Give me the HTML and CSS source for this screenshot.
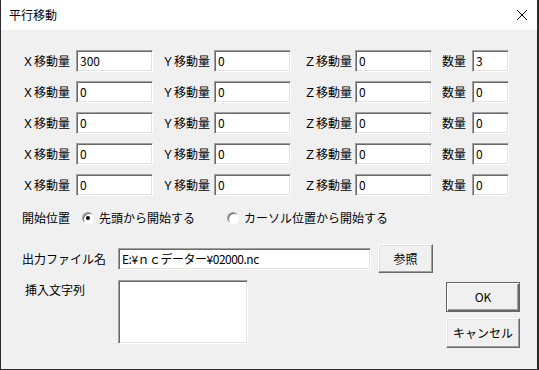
FILE: index.html
```html
<!DOCTYPE html>
<html lang="ja">
<head>
  <meta charset="UTF-8" />
  <title>平行移動</title>
  <link rel="stylesheet" href="styles.css">
</head>
<body>
  <div class="window">
    <div class="titlebar">
      <span class="title">平行移動</span>
      <svg class="close" width="12" height="12" viewBox="0 0 12 12">
        <path d="M1 1 L11 11 M11 1 L1 11" stroke="#000" stroke-width="1" fill="none" />
      </svg>
    </div>

    <div class="content">
      <div class="moves">
        <span class="lbl">Ｘ移動量</span><div class="edit">300</div>
        <span class="lbl lbl-y">Ｙ移動量</span><div class="edit">0</div>
        <span class="lbl lbl-z">Ｚ移動量</span><div class="edit">0</div>
        <span class="lbl lbl-n">数量</span><div class="edit">3</div>

        <span class="lbl">Ｘ移動量</span><div class="edit">0</div>
        <span class="lbl lbl-y">Ｙ移動量</span><div class="edit">0</div>
        <span class="lbl lbl-z">Ｚ移動量</span><div class="edit">0</div>
        <span class="lbl lbl-n">数量</span><div class="edit">0</div>

        <span class="lbl">Ｘ移動量</span><div class="edit">0</div>
        <span class="lbl lbl-y">Ｙ移動量</span><div class="edit">0</div>
        <span class="lbl lbl-z">Ｚ移動量</span><div class="edit">0</div>
        <span class="lbl lbl-n">数量</span><div class="edit">0</div>

        <span class="lbl">Ｘ移動量</span><div class="edit">0</div>
        <span class="lbl lbl-y">Ｙ移動量</span><div class="edit">0</div>
        <span class="lbl lbl-z">Ｚ移動量</span><div class="edit">0</div>
        <span class="lbl lbl-n">数量</span><div class="edit">0</div>

        <span class="lbl">Ｘ移動量</span><div class="edit">0</div>
        <span class="lbl lbl-y">Ｙ移動量</span><div class="edit">0</div>
        <span class="lbl lbl-z">Ｚ移動量</span><div class="edit">0</div>
        <span class="lbl lbl-n">数量</span><div class="edit">0</div>
      </div>

      <div class="start-row">
        <span class="start-label">開始位置</span>
        <label class="radio">
          <span class="radio-dot checked"></span>
          <span>先頭から開始する</span>
        </label>
        <label class="radio radio-second">
          <span class="radio-dot"></span>
          <span>カーソル位置から開始する</span>
        </label>
      </div>

      <div class="file-row">
        <span class="file-label">出力ファイル名</span>
        <div class="edit edit-path">E:¥ｎｃデーター¥02000.nc</div>
        <div class="btn btn-browse">参照</div>
      </div>

      <div class="bottom-row">
        <span class="insert-label">挿入文字列</span>
        <div class="edit edit-area"></div>
        <div class="buttons">
          <div class="btn btn-default">OK</div>
          <div class="btn">キャンセル</div>
        </div>
      </div>
    </div>
  </div>
</body>
</html>
```

FILE: styles.css
```css
* {
  box-sizing: border-box;
  margin: 0;
  padding: 0;
}

body {
  width: 539px;
  height: 370px;
  overflow: hidden;
  font-family: "Noto Sans CJK JP", "DejaVu Sans", sans-serif;
  font-size: 12px;
  line-height: 1;
  color: #000;
  background: #f0f0f0;
}

.window {
  width: 539px;
  height: 370px;
  border: 1px solid #2b2b2b;
  border-top: none;
  border-right-width: 2px;
  background: #f0f0f0;
}

.titlebar {
  height: 30px;
  background: #fff;
  display: flex;
  align-items: center;
  justify-content: space-between;
  padding: 0 9px 1px 8px;
}

.title {
  font-size: 12px;
}

.content {
  padding: 20px 0 0 21px;
}

/* grid of move fields */
.moves {
  display: grid;
  grid-template-columns: 54px 77px 61px 77px 64px 77px 40px 37px;
  grid-auto-rows: 22px;
  row-gap: 9px;
  align-items: center;
}

.lbl {
  white-space: nowrap;
}

.lbl-y {
  padding-left: 9px;
}

.lbl-z {
  padding-left: 13px;
}

.lbl-n {
  padding-left: 10px;
}

.edit {
  height: 22px;
  background: #fff;
  border: 1px solid;
  border-color: #a0a0a0 #fff #fff #a0a0a0;
  box-shadow: inset 1px 1px #696969, inset -1px -1px #e3e3e3;
  padding: 4px 3px 0;
  white-space: nowrap;
  overflow: hidden;
}

/* start position radios */
.start-row {
  display: flex;
  align-items: center;
  height: 22px;
  margin-top: 11px;
}

.start-label {
  width: 60px;
}

.radio {
  display: flex;
  align-items: center;
  gap: 5px;
}

.radio-second {
  margin-left: 32px;
}

.radio-dot {
  width: 12px;
  height: 12px;
  border-radius: 50%;
  background: #fff;
  border: 1px solid;
  border-color: #a0a0a0 #fff #fff #a0a0a0;
  box-shadow: inset 1px 1px #696969;
  display: flex;
  align-items: center;
  justify-content: center;
}

.radio-dot.checked::after {
  content: "";
  width: 4px;
  height: 4px;
  border-radius: 50%;
  background: #000;
}

/* output file */
.file-row {
  display: flex;
  align-items: center;
  height: 29px;
  margin-top: 15px;
}

.file-label {
  width: 96px;
}

.edit-path {
  width: 253px;
  letter-spacing: -0.5px;
}

.btn {
  display: flex;
  align-items: center;
  justify-content: center;
  background: #f0f0f0;
  border: 1px solid;
  border-color: #fff #696969 #696969 #fff;
  box-shadow: inset -1px -1px #a0a0a0, inset 1px 1px #e3e3e3;
}

.btn-browse {
  width: 55px;
  height: 29px;
  margin-left: 7px;
}

.btn-default {
  border-color: #646464;
  box-shadow: inset 1px 1px #fff, inset -1px -1px #696969, inset -2px -2px #a0a0a0;
}

/* insert string + dialog buttons */
.bottom-row {
  display: flex;
  margin-top: 7px;
}

.insert-label {
  width: 96px;
  padding: 4px 0 0 3px;
}

.edit-area {
  width: 130px;
  height: 64px;
}

.buttons {
  display: flex;
  flex-direction: column;
  gap: 6px;
  margin: 2px 0 0 198px;
}

.buttons .btn {
  width: 74px;
  height: 30px;
}
```
